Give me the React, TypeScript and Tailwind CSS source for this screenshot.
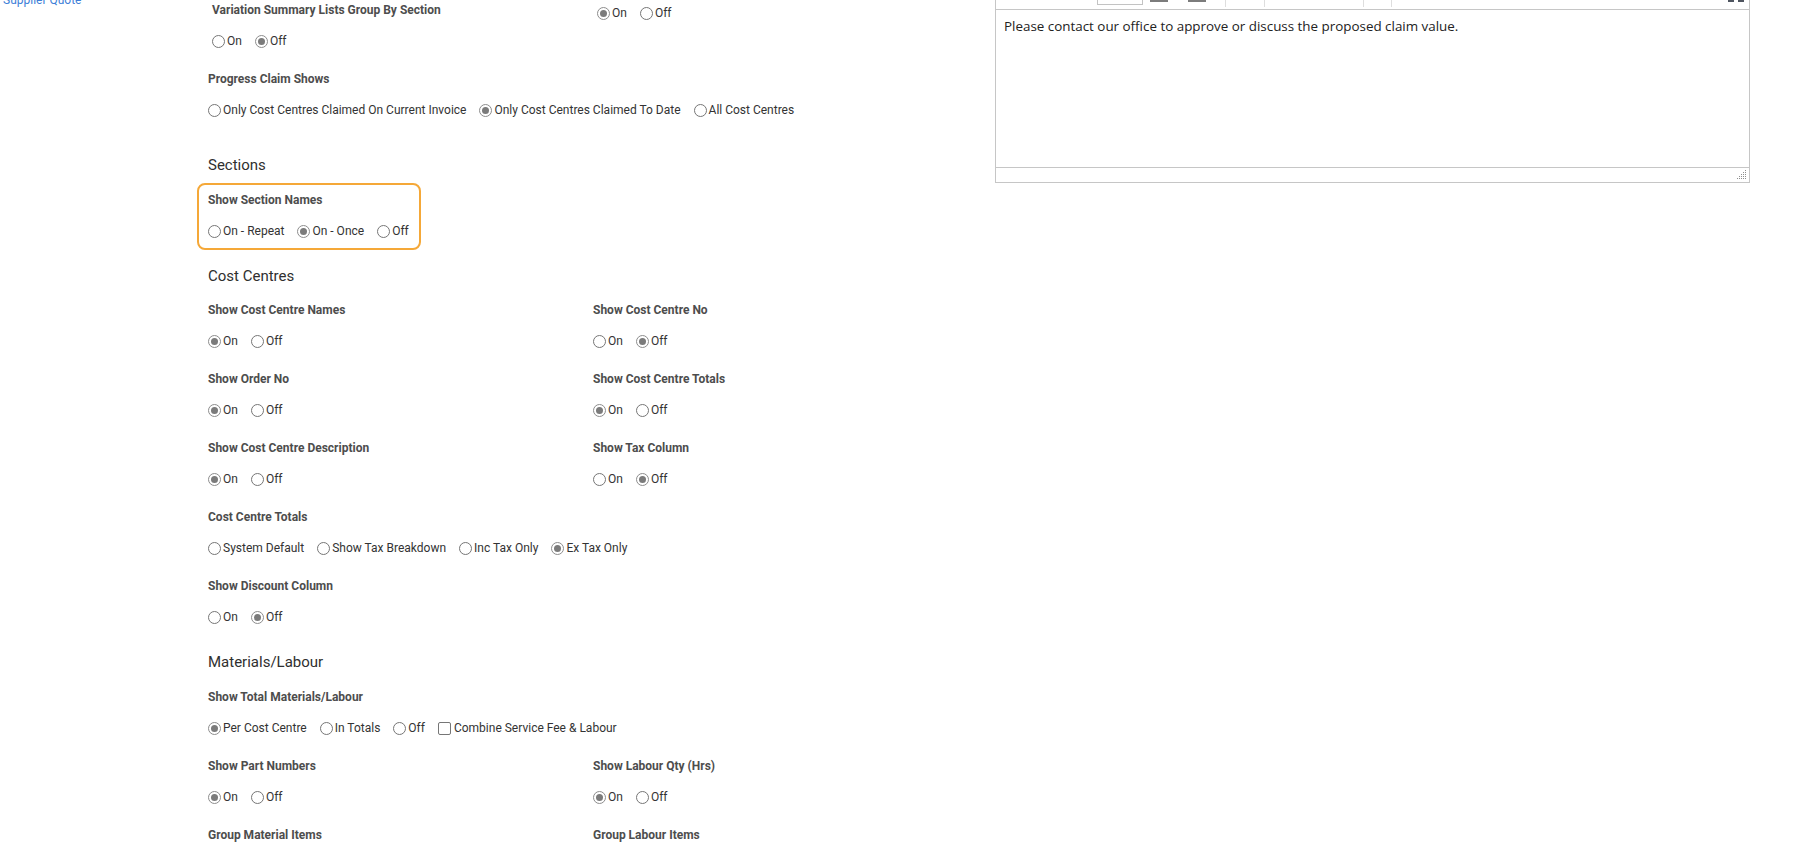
import React from "react"

type Opt = { label: string; checked?: boolean; box?: boolean }

function Choice({ label, checked, box }: Opt) {
  if (box) {
    return (
      <span className="mr-[13px] inline-flex items-center">
        <span className="h-[13px] w-[13px] rounded-[2px] border border-[#767676] bg-white" />
        <span className="ml-[3px]">{label}</span>
      </span>
    )
  }
  return (
    <span className="mr-[13px] inline-flex items-center">
      <span
        className={
          checked
            ? "flex h-[13px] w-[13px] items-center justify-center rounded-full border border-[#8d8d8d] bg-white"
            : "flex h-[13px] w-[13px] items-center justify-center rounded-full border border-[#767676] bg-white"
        }
      >
        {checked && <span className="h-[7px] w-[7px] rounded-full bg-[#7b7b7b]" />}
      </span>
      <span className="ml-[2px]">{label}</span>
    </span>
  )
}

function Options({ options }: { options: Opt[] }) {
  return (
    <div className="flex h-5 items-center whitespace-nowrap text-[12px] text-[#333]">
      {options.map((o) => (
        <Choice key={o.label} {...o} />
      ))}
    </div>
  )
}

function Label({ children }: { children: React.ReactNode }) {
  return <div className="h-5 whitespace-nowrap text-[12px] font-bold leading-5 text-[#4d4d4d]">{children}</div>
}

function Field({ label, options, className = "" }: { label: string; options?: Opt[]; className?: string }) {
  return (
    <div className={className}>
      <Label>{label}</Label>
      {options && (
        <div className="mt-[11px]">
          <Options options={options} />
        </div>
      )}
    </div>
  )
}

function Heading({ children, className = "" }: { children: React.ReactNode; className?: string }) {
  return <div className={`h-5 text-[15px] leading-5 text-[#2f2f2f] ${className}`}>{children}</div>
}

const onOff = (on: boolean): Opt[] => [
  { label: "On", checked: on },
  { label: "Off", checked: !on },
]

function ResizeGrip() {
  const dots: [number, number][] = []
  for (let r = 0; r < 5; r++) {
    for (let c = 0; c <= r; c++) {
      dots.push([8 - c * 2, r * 2])
    }
  }
  return (
    <svg width="10" height="10" viewBox="0 0 10 10" className="mr-[2px]">
      {dots.map(([x, y]) => (
        <rect key={`${x}-${y}`} x={x} y={y} width="1" height="1" fill="#8f8f8f" />
      ))}
    </svg>
  )
}

function Editor() {
  return (
    <div className="-mt-[30px] w-[755px] self-start border border-[#c6c6c6] bg-white">
      <div className="flex h-[39px] items-end border-b border-[#c6c6c6]">
        <div className="mb-[4px] ml-[101px] h-[30px] w-[46px] border border-[#c3c3c3] bg-white" />
        <div className="mb-[7px] ml-[7px] h-[12px] w-[18px] bg-[#7c7c7c]" />
        <div className="mb-[7px] ml-[20px] h-[12px] w-[18px] bg-[#7c7c7c]" />
        <div className="mb-[2px] ml-[19px] h-[20px] w-px bg-[#dedede]" />
        <div className="mb-[2px] ml-[38px] h-[20px] w-px bg-[#dedede]" />
        <div className="mb-[2px] ml-[98px] h-[20px] w-px bg-[#dedede]" />
        <div className="mb-[2px] ml-[27px] h-[20px] w-px bg-[#dedede]" />
        <div className="mb-[7px] ml-auto mr-[5px] flex gap-[4px]">
          <span className="h-[10px] w-[6px] bg-[#4f5560]" />
          <span className="h-[10px] w-[6px] bg-[#4f5560]" />
        </div>
      </div>
      <div className="h-[157px] px-[8px] pt-[6px] font-['Open_Sans',sans-serif] text-[13.4px] leading-5 text-[#222]">
        Please contact our office to approve or discuss the proposed claim value.
      </div>
      <div className="flex h-[15px] items-center justify-end border-t border-[#c6c6c6]">
        <ResizeGrip />
      </div>
    </div>
  )
}

export default function App() {
  return (
    <div className="flex h-[860px] w-full overflow-hidden bg-white font-[Roboto,sans-serif]">
      <nav className="w-[196px] shrink-0 pl-[3px]">
        <a className="-mt-[8px] block text-[12px] leading-4 text-[#3f7fd8]">Supplier Quote</a>
      </nav>

      <div className="w-[799px] shrink-0 pl-[12px]">
        <div className="grid grid-cols-[385px_1fr] pl-[4px]">
          <Field label="Variation Summary Lists Group By Section" options={onOff(false)} />
          <div className="pt-[3px]">
            <Options options={onOff(true)} />
          </div>
        </div>

        <Field
          className="mt-[18px]"
          label="Progress Claim Shows"
          options={[
            { label: "Only Cost Centres Claimed On Current Invoice" },
            { label: "Only Cost Centres Claimed To Date", checked: true },
            { label: "All Cost Centres" },
          ]}
        />

        <Heading className="mt-[35px]">Sections</Heading>
        <div className="-ml-[11px] mt-[8px] w-[224px] rounded-lg border-2 border-[#f5a838] pb-[7px] pl-[9px] pt-[5px]">
          <Field
            label="Show Section Names"
            options={[{ label: "On - Repeat" }, { label: "On - Once", checked: true }, { label: "Off" }]}
          />
        </div>

        <Heading className="mt-[16px]">Cost Centres</Heading>
        <div className="mt-[14px] grid grid-cols-[385px_1fr] gap-y-[18px]">
          <Field label="Show Cost Centre Names" options={onOff(true)} />
          <Field label="Show Cost Centre No" options={onOff(false)} />
          <Field label="Show Order No" options={onOff(true)} />
          <Field label="Show Cost Centre Totals" options={onOff(true)} />
          <Field label="Show Cost Centre Description" options={onOff(true)} />
          <Field label="Show Tax Column" options={onOff(false)} />
        </div>
        <Field
          className="mt-[18px]"
          label="Cost Centre Totals"
          options={[
            { label: "System Default" },
            { label: "Show Tax Breakdown" },
            { label: "Inc Tax Only" },
            { label: "Ex Tax Only", checked: true },
          ]}
        />
        <Field className="mt-[18px]" label="Show Discount Column" options={onOff(false)} />

        <Heading className="mt-[25px]">Materials/Labour</Heading>
        <Field
          className="mt-[15px]"
          label="Show Total Materials/Labour"
          options={[
            { label: "Per Cost Centre", checked: true },
            { label: "In Totals" },
            { label: "Off" },
            { label: "Combine Service Fee & Labour", box: true },
          ]}
        />
        <div className="mt-[18px] grid grid-cols-[385px_1fr] gap-y-[18px]">
          <Field label="Show Part Numbers" options={onOff(true)} />
          <Field label="Show Labour Qty (Hrs)" options={onOff(true)} />
          <Field label="Group Material Items" />
          <Field label="Group Labour Items" />
        </div>
      </div>

      <Editor />
    </div>
  )
}
